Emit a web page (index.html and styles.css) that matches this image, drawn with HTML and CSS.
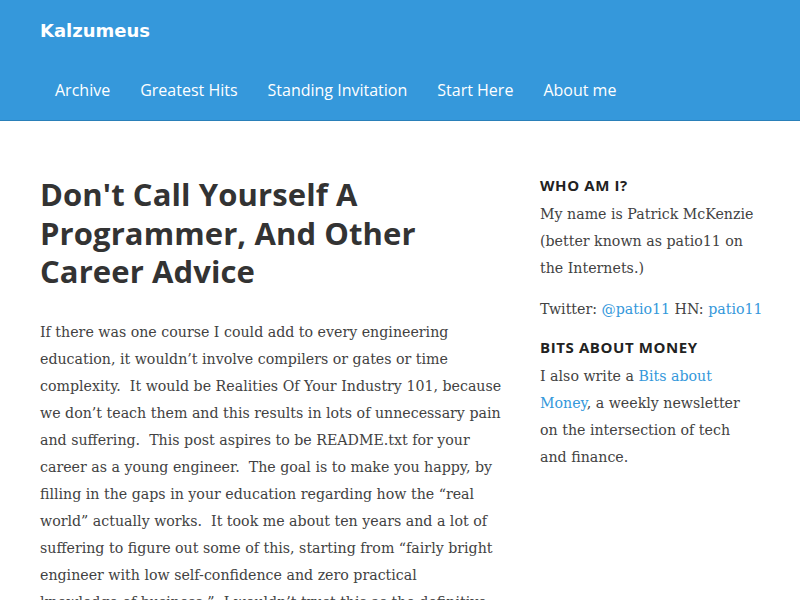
FILE: index.html
```html
<!DOCTYPE html>
<html>
<head>
<meta charset="utf-8">
<title>Kalzumeus</title>
<link rel="stylesheet" href="styles.css">
</head>
<body>
<header class="site-header">
  <div class="brand">Kalzumeus</div>
  <nav class="nav">
    <a href="#">Archive</a>
    <a href="#">Greatest Hits</a>
    <a href="#">Standing Invitation</a>
    <a href="#">Start Here</a>
    <a href="#">About me</a>
  </nav>
</header>
<div class="content">
  <main class="main">
    <h1 class="title">Don't Call Yourself A<br>Programmer, And Other<br>Career Advice</h1>
    <p class="body">If there was one course I could add to every engineering<br>education, it wouldn’t involve compilers or gates or time<br>complexity.&nbsp; It would be Realities Of Your Industry 101, because<br>we don’t teach them and this results in lots of unnecessary pain<br>and suffering.&nbsp; This post aspires to be README.txt for your<br>career as a young engineer.&nbsp; The goal is to make you happy, by<br>filling in the gaps in your education regarding how the “real<br>world” actually works.&nbsp; It took me about ten years and a lot of<br>suffering to figure out some of this, starting from “fairly bright<br>engineer with low self-confidence and zero practical<br>knowledge of business.”&nbsp; I wouldn’t trust this as the definitive</p>
  </main>
  <aside class="sidebar">
    <h2 class="widget-title">Who am I?</h2>
    <p class="widget-text">My name is Patrick McKenzie<br>(better known as patio11 on<br>the Internets.)</p>
    <p class="widget-text">Twitter: <a href="#">@patio11</a> HN: <a href="#">patio11</a></p>
    <h2 class="widget-title">Bits about Money</h2>
    <p class="widget-text">I also write a <a href="#">Bits about</a><br><a href="#">Money</a>, a weekly newsletter<br>on the intersection of tech<br>and finance.</p>
  </aside>
</div>
</body>
</html>
```

FILE: styles.css
```css
html, body {
  margin: 0;
  padding: 0;
  background: #fff;
}
body {
  font-family: "DejaVu Serif", serif;
  color: #424242;
  overflow: hidden;
}
a {
  color: #3498db;
  text-decoration: none;
}
.site-header {
  background: #3598db;
  border-bottom: 1px solid #2a80b9;
  height: 121px;
  box-sizing: border-box;
}
.brand {
  font-family: "DejaVu Sans", sans-serif;
  font-weight: bold;
  font-size: 18px;
  color: #fff;
  padding: 19px 40px 0;
  height: 41px;
  line-height: 24px;
}
.nav {
  display: flex;
  padding: 9px 40px 0;
}
.nav a {
  font-family: "Open Sans", sans-serif;
  color: #fff;
  font-size: 16px;
  padding: 10px 15px;
  line-height: 22px;
}
.content {
  display: flex;
  padding: 54px 40px 0;
  gap: 30px;
}
.main {
  width: 470px;
  flex: none;
}
.title {
  font-family: "Open Sans", sans-serif;
  font-weight: 700;
  font-size: 31px;
  line-height: 38.5px;
  letter-spacing: 0.1px;
  color: #333;
  margin: 0 0 28px;
}
.body {
  font-size: 14.2px;
  line-height: 27px;
  margin: 0;
  white-space: nowrap;
}
.sidebar {
  width: 230px;
  padding-top: 0;
}
.widget-title {
  font-family: "Open Sans", sans-serif;
  font-weight: 700;
  font-size: 15px;
  letter-spacing: 0.6px;
  text-transform: uppercase;
  color: #222;
  margin: 0 0 6px;
  line-height: 20px;
}
.widget-text {
  font-size: 14.2px;
  line-height: 27px;
  margin: 0 0 14px;
  white-space: nowrap;
}
.widget-text + .widget-title {
  margin-top: -0.5px;
}
```
